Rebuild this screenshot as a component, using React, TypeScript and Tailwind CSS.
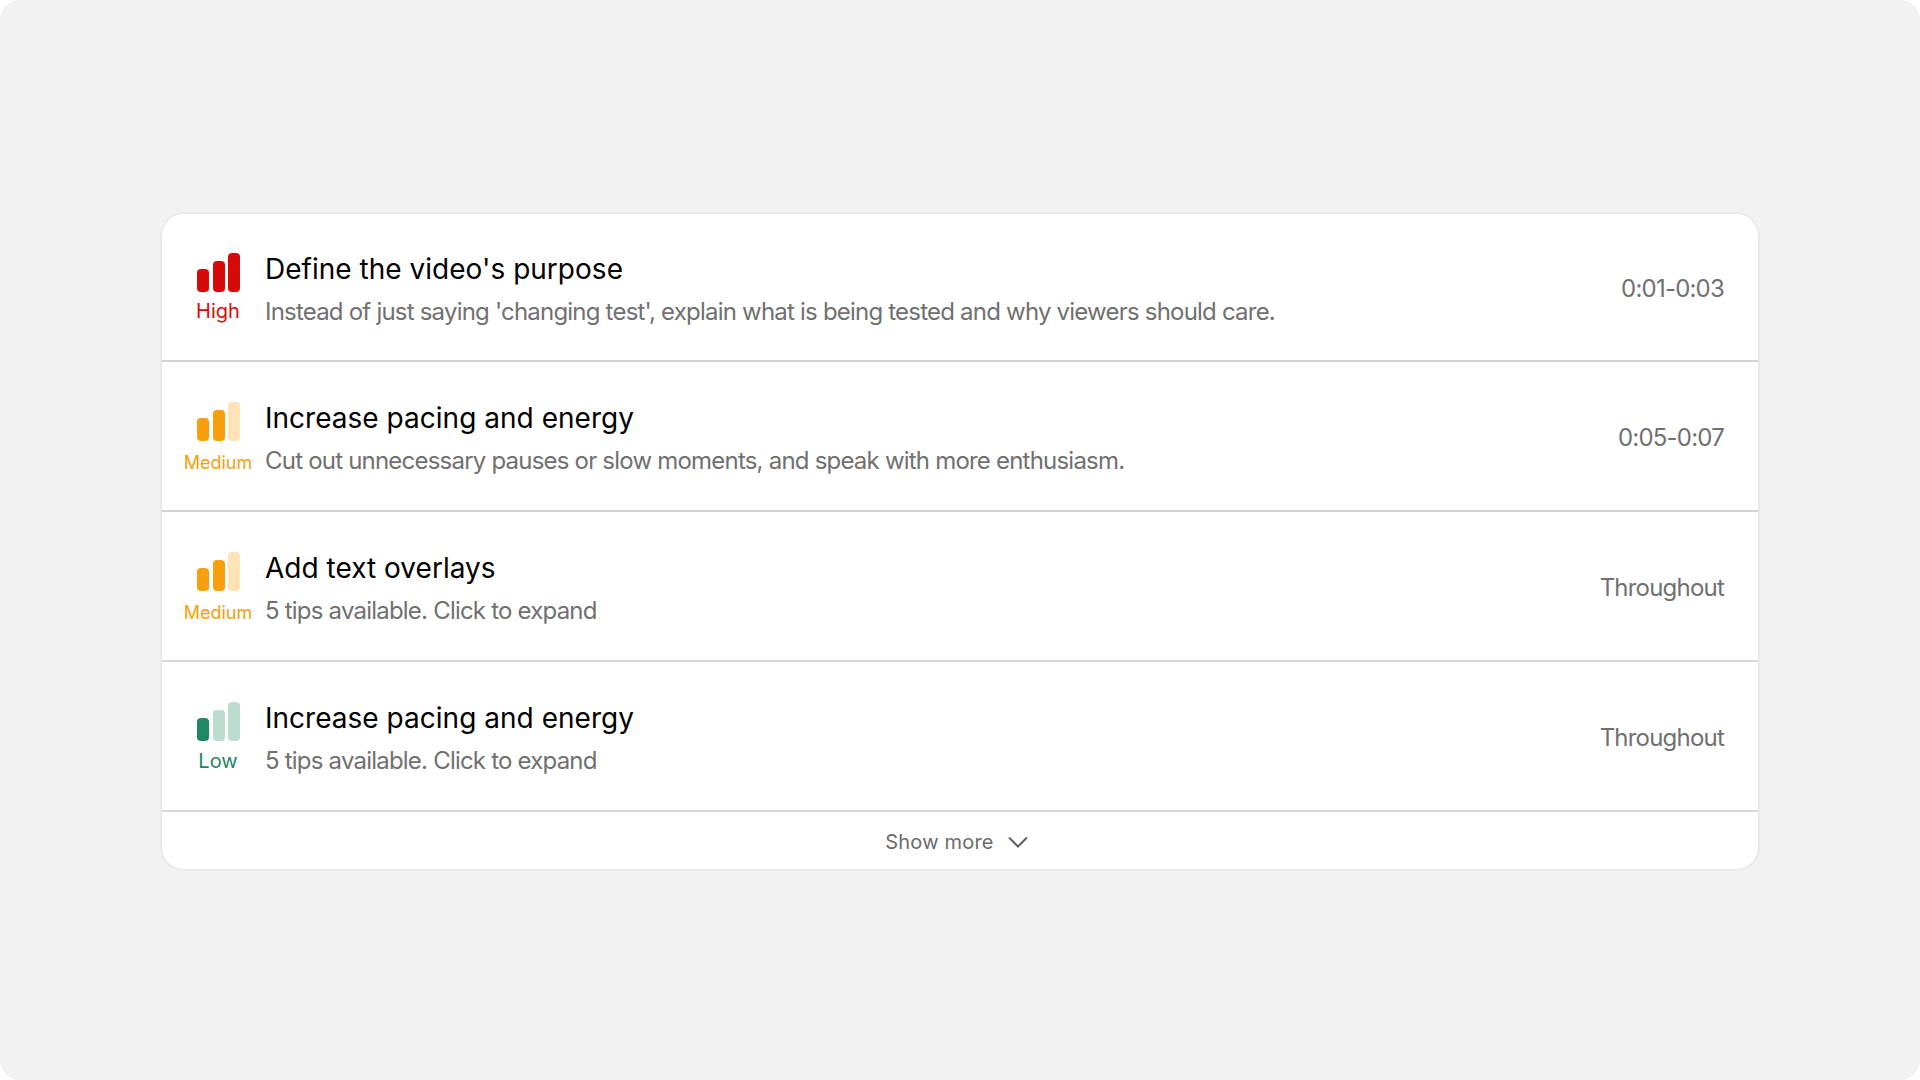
const levels = {
  high: { label: 'High', text: 'text-[#d70a0a] text-[20px] mt-[7px]', on: 'bg-[#d70a0a]', off: 'bg-[#d70a0a]', count: 3, box: '' },
  medium: { label: 'Medium', text: 'text-[#f59e0b] text-[18px] mt-[10px]', on: 'bg-[#f79f0c]', off: 'bg-[#fde3b6]', count: 2, box: 'mt-[4px]' },
  low: { label: 'Low', text: 'text-[#1f8763] text-[20px] mt-[8px]', on: 'bg-[#1f8763]', off: 'bg-[#bcdcd0]', count: 1, box: 'mt-[1px]' },
};

type Level = keyof typeof levels;

const rows: { level: Level; title: string; desc: string; time: string }[] = [
  {
    level: 'high',
    title: "Define the video's purpose",
    desc: "Instead of just saying 'changing test', explain what is being tested and why viewers should care.",
    time: '0:01-0:03',
  },
  {
    level: 'medium',
    title: 'Increase pacing and energy',
    desc: 'Cut out unnecessary pauses or slow moments, and speak with more enthusiasm.',
    time: '0:05-0:07',
  },
  {
    level: 'medium',
    title: 'Add text overlays',
    desc: '5 tips available. Click to expand',
    time: 'Throughout',
  },
  {
    level: 'low',
    title: 'Increase pacing and energy',
    desc: '5 tips available. Click to expand',
    time: 'Throughout',
  },
];

const barHeights = ['h-[23px]', 'h-[31px]', 'h-[39px]'];

const Priority = ({ level }: { level: Level }) => {
  const l = levels[level];
  return (
    <div className={`flex w-[68px] shrink-0 flex-col items-center ${l.box}`}>
      <div className="flex h-[40px] items-end gap-[3.5px] pl-[1px]">
        {barHeights.map((h, i) => (
          <div key={h} className={`w-[12px] rounded-[4px] ${h} ${i < l.count ? l.on : l.off}`} />
        ))}
      </div>
      <span className={`text-center leading-[24px] ${l.text}`}>{l.label}</span>
    </div>
  );
};

const App = () => {
  return (
    <div className="h-screen w-full bg-white font-['Inter',sans-serif]">
      <div className="flex h-full w-full items-center justify-center rounded-[20px] bg-[#f2f2f2] pt-[3px]">
        <div className="w-[1600px] overflow-hidden rounded-[24px] border-2 border-[#e9e9e9] bg-white">
          {rows.map((row, i) => (
            <div
              key={i}
              className={`flex items-center border-b-2 border-[#d4d4d4] pr-[34px] pl-[22px] ${i === 0 ? 'h-[148px]' : 'h-[150px]'}`}
            >
              <Priority level={row.level} />
              <div className="mt-[4px] ml-[13px] min-w-0 flex-1">
                <div className="text-[28px] leading-[36px] font-[440] tracking-[0.02px] text-black">{row.title}</div>
                <div className="mt-[9px] text-[24px] leading-[32px] tracking-[-0.79px] text-[#707070]">{row.desc}</div>
              </div>
              <div className="mt-[4px] text-[24px] leading-[32px] tracking-[-0.79px] text-[#707070]">{row.time}</div>
            </div>
          ))}
          <div className="flex h-[57px] items-center justify-center gap-[14px] pt-[2px] pr-[7px] text-[20px] tracking-[0.2px] text-[#6b6b6b]">
            <span>Show more</span>
            <svg width="20" height="12" viewBox="0 0 20 12" fill="none" stroke="#5f5f5f" strokeWidth="2">
              <path d="M1 1.5l9 9 9-9" />
            </svg>
          </div>
        </div>
      </div>
    </div>
  );
};

export default App;
